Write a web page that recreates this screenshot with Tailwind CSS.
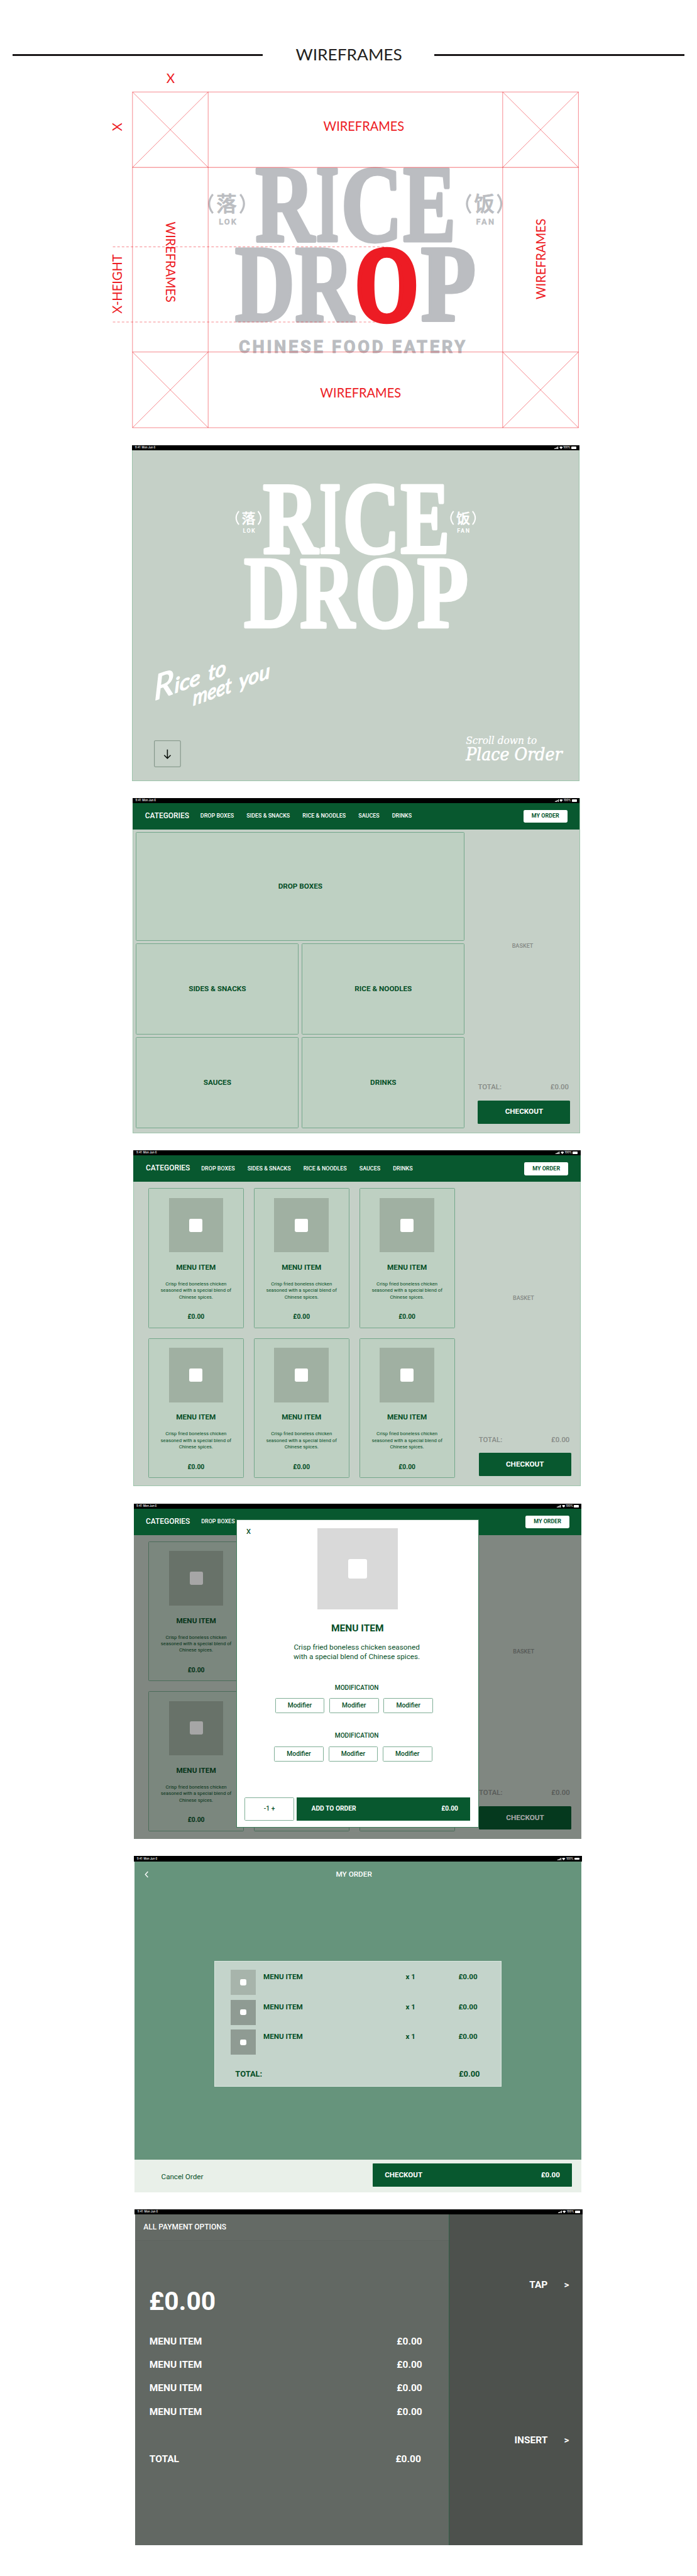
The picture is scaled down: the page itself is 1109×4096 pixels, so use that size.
<!DOCTYPE html>
<html lang="en">
<head>
<meta charset="utf-8">
<title>Rice Drop – Wireframes</title>
<script src="https://cdn.jsdelivr.net/npm/@tailwindcss/browser@4"></script>
</head>
<body class="bg-white overflow-x-hidden">
<!-- The board is laid out on a 1400px canvas and scaled as a whole -->
<div class="[zoom:0.7919] w-[1400px] h-[5172px] flex flex-col font-[Roboto,sans-serif] font-bold text-[#054f27] whitespace-nowrap overflow-hidden">

  <header class="mt-[90px] h-[41px] px-[25px] flex items-center justify-between text-[#231f20]">
    <div class="w-[503px] h-[3px] bg-[#1a1718]"></div>
    <svg class="w-[218px] h-[41px]" viewBox="0 0 218 41"><text x="3" y="32" font-family="Lato, sans-serif" font-weight="400" font-size="32" textLength="214" lengthAdjust="spacingAndGlyphs" fill="#231f20">WIREFRAMES</text></svg>
    <div class="w-[503px] h-[3px] bg-[#1a1718]"></div>
  </header>

  <!-- Logo clear-space diagram -->
  <svg class="shrink-0 mt-[9px] ml-[220px] w-[950px] h-[725px]" viewBox="220 140 950 725">
    <g font-family="'Liberation Serif', serif" font-weight="700" font-size="100" fill="#bbbdc1" stroke="#bbbdc1" stroke-width="2.8" stroke-linejoin="round">
      <text transform="translate(513.2 483.2) scale(1.647 2.2)">R</text>
      <text transform="translate(634.7 483.2) scale(1.2 2.2)">I</text>
      <text transform="translate(685.3 483.2) scale(1.713 2.2)">C</text>
      <text transform="translate(810 483.2) scale(1.592 2.2)">E</text>
      <text transform="translate(472.2 644) scale(1.665 2.2)">D</text>
      <text transform="translate(592.8 644) scale(1.639 2.2)">R</text>
      <text transform="translate(845.6 644) scale(1.815 2.2)">P</text>
    </g>
    <g fill="#bbbdc1" stroke="#bbbdc1" font-family="'Noto Sans CJK SC', sans-serif" font-weight="500" font-size="41" stroke-width=".9">
      <text x="435" y="424">落</text><text x="953" y="424">饭</text>
      <g fill="none" stroke-width="4"><path d="M428 390Q413 409 428 428M483 390Q498 409 483 428M946 390Q931 409 946 428M1000 390Q1015 409 1000 428"/></g>
    </g>
    <g fill="#bbbdc1" font-family="Roboto, sans-serif" font-weight="700">
      <text x="440" y="450.7" font-size="16.2" textLength="35" stroke="#bbbdc1" stroke-width=".4">LOK</text>
      <text x="957" y="450.7" font-size="16.2" textLength="36" stroke="#bbbdc1" stroke-width=".4">FAN</text>
      <text x="480" y="708" font-size="34.5" textLength="455" stroke="#bbbdc1" stroke-width="1.200">CHINESE FOOD EATERY</text>
    </g>
    <g fill="none" stroke="#ed1c24" stroke-opacity=".6" stroke-width="1.1">
      <path d="M266.500 184.500H1162.500V858.600H266.500ZM418.500 184.500V858.600M1010.300 184.500V858.600M266.500 706.600H1162.500"/>
      <path stroke-opacity=".42" stroke-width="2" d="M266.500 336H1162.500"/>
      <path d="M266.500 184.500L418.500 336M418.500 184.500L266.500 336M1010.300 184.500L1162.500 336M1162.500 184.500L1010.300 336M266.500 706.600L418.500 858.600M418.500 706.600L266.500 858.600M1010.300 706.600L1162.500 858.600M1162.500 706.600L1010.300 858.600"/>
      <path stroke-dasharray="5 4" d="M227 495.500H775M227 646.400H775"/>
    </g>
    <text font-family="'Liberation Serif', serif" font-weight="700" font-size="100" fill="#ed1c24" stroke="#ed1c24" stroke-width="5" stroke-linejoin="round" transform="translate(714.5 642.500) scale(1.62 2.15)">O</text>
    <g fill="#ed1c24" font-family="Lato, sans-serif" font-weight="400" font-size="26">
      <text x="334.500" y="166.700">X</text>
      <text x="650" y="263" textLength="162.500" lengthAdjust="spacingAndGlyphs">WIREFRAMES</text>
      <text x="643.500" y="798.500" textLength="162.500" lengthAdjust="spacingAndGlyphs">WIREFRAMES</text>
      <text transform="translate(245.500 263) rotate(-90)">X</text>
      <text transform="translate(245.500 629.500) rotate(-90)" textLength="119" lengthAdjust="spacingAndGlyphs">X-HEIGHT</text>
      <text transform="translate(333.500 445) rotate(90)" textLength="162" lengthAdjust="spacingAndGlyphs">WIREFRAMES</text>
      <text transform="translate(1096.500 601) rotate(-90)" textLength="162" lengthAdjust="spacingAndGlyphs">WIREFRAMES</text>
    </g>
  </svg>

  <!-- Screen 1: welcome -->
  <section class="shrink-0 mt-[29px] ml-[265px] w-[899px] h-[674px] flex flex-col bg-[#c5d0c7] border-x border-b border-[#9cc4aa]">
    <div data-part="status"></div>
    <svg class="-ml-px w-[899px] h-[663px]" viewBox="265 904.6 899 663">
      <g transform="translate(48.900 659.400) scale(.933)" font-family="'Liberation Serif', serif" font-weight="700" font-size="100" fill="#fff" stroke="#fff" stroke-width="2.8" stroke-linejoin="round">
        <text transform="translate(513.2 483.2) scale(1.647 2.2)">R</text>
        <text transform="translate(634.7 483.2) scale(1.2 2.2)">I</text>
        <text transform="translate(685.3 483.2) scale(1.713 2.2)">C</text>
        <text transform="translate(810 483.2) scale(1.592 2.2)">E</text>
        <text transform="translate(472.2 644) scale(1.665 2.2)">D</text>
        <text transform="translate(592.8 644) scale(1.639 2.2)">R</text>
        <text transform="translate(712.2 644) scale(1.684 2.2)">O</text>
        <text transform="translate(845.6 644) scale(1.815 2.2)">P</text>
      </g>
      <g fill="#fff" font-family="'Noto Sans CJK SC', sans-serif" font-weight="500" font-size="28">
        <text x="485" y="1051" stroke="#fff" stroke-width=".5">落</text><text x="917" y="1051" stroke="#fff" stroke-width=".5">饭</text>
        <path fill="none" stroke="#fff" stroke-width="2.600" d="M479.500 1027Q468.500 1040.500 479.500 1054M518 1027Q529 1040.500 518 1054M911.500 1027Q900.500 1040.500 911.500 1054M949.500 1027Q960.500 1040.500 949.500 1054"/>
      </g>
      <g fill="#fff" font-family="Roboto, sans-serif" font-weight="700" font-size="11.300">
        <text x="487.500" y="1069.700" textLength="24.500">LOK</text>
        <text x="918.500" y="1069.700" textLength="25">FAN</text>
      </g>
      <g fill="#fff" stroke="#fff" stroke-width="1.800" stroke-linejoin="round" font-family="Lato, sans-serif" font-weight="400" font-style="italic" font-size="42">
        <text transform="translate(309 1408) skewY(-19.500)" font-size="70" textLength="40" lengthAdjust="spacingAndGlyphs">R</text>
        <text transform="translate(350 1393) skewY(-19.500)" textLength="52" lengthAdjust="spacingAndGlyphs">ice</text>
        <text transform="translate(418 1368) skewY(-19.500)" textLength="36" lengthAdjust="spacingAndGlyphs">to</text>
        <text transform="translate(387 1418) skewY(-19.500)" textLength="78" lengthAdjust="spacingAndGlyphs">meet</text>
        <text transform="translate(480 1384) skewY(-19.500)" textLength="62" lengthAdjust="spacingAndGlyphs">you</text>
      </g>
      <rect x="309.500" y="1488.500" width="52.500" height="52.500" rx="2" fill="none" stroke="#7d9083" stroke-width="1.300"/>
      <path d="M335.700 1506V1524M329.200 1517.500L335.700 1524L342.200 1517.500" fill="none" stroke="#0b120d" stroke-width="2"/>
      <g fill="#fff" stroke="#fff" font-family="'DejaVu Serif Condensed', 'DejaVu Serif', serif" font-weight="400" font-style="italic">
        <text x="936" y="1495" font-size="22" textLength="143" lengthAdjust="spacingAndGlyphs" stroke-width=".3">Scroll down to</text>
        <text x="936" y="1528.300" font-size="36" textLength="194" lengthAdjust="spacingAndGlyphs" stroke-width=".8">Place Order</text>
      </g>
    </svg>
  </section>

  <!-- Screen 2: categories -->
  <section class="shrink-0 mt-[34px] ml-[266px] w-[899px] h-[674px] flex flex-col bg-[#c5d0c7] border-x border-b border-[#9cc4aa]">
    <div data-part="status"></div>
    <div data-part="nav"></div>
    <div class="flex">
      <div class="ml-[6px] mt-[5.3px] w-[660.3px] grid grid-cols-2 grid-rows-[217.8px_182.7px_182.6px] gap-x-[6.4px] gap-y-[5.7px] text-[14.8px]">
        <div class="col-span-2 flex items-center justify-center rounded-[2px] border border-[#74a78b] bg-[#bed0c2]">DROP BOXES</div>
        <div class="flex items-center justify-center rounded-[2px] border border-[#74a78b] bg-[#bed0c2]">SIDES &amp; SNACKS</div>
        <div class="flex items-center justify-center rounded-[2px] border border-[#74a78b] bg-[#bed0c2]">RICE &amp; NOODLES</div>
        <div class="flex items-center justify-center rounded-[2px] border border-[#74a78b] bg-[#bed0c2]">SAUCES</div>
        <div class="flex items-center justify-center rounded-[2px] border border-[#74a78b] bg-[#bed0c2]">DRINKS</div>
      </div>
      <div class="ml-[26.700px]" data-part="basket"></div>
    </div>
  </section>

  <!-- Screen 3: menu -->
  <section class="shrink-0 mt-[33.8px] ml-[267.8px] w-[899px] h-[674.2px] flex flex-col bg-[#c5d0c7] border-x border-b border-[#9cc4aa]">
    <div data-part="status"></div>
    <div data-part="nav"></div>
    <div class="flex">
      <div class="ml-[28.6px] mt-[12.3px] w-[616.3px]" data-part="menu"></div>
      <div class="ml-[48px]" data-part="basket"></div>
    </div>
  </section>

  <!-- Screen 4: item dialog over the menu -->
  <section class="relative shrink-0 mt-[35px] ml-[269px] w-[899px] h-[673.8px] flex flex-col bg-[#c5d0c7] overflow-hidden">
    <div data-part="status"></div>
    <div data-part="navShort"></div>
    <div class="flex">
      <div class="ml-[29px] mt-[12.3px] w-[616.3px]" data-part="menu"></div>
      <div class="ml-[48px]" data-part="basket"></div>
    </div>
    <div class="absolute inset-x-0 bottom-0 top-[63.6px] bg-black/35"></div>
    <div class="absolute left-[205.8px] top-[32.600px] w-[487px] h-[617.600px] flex flex-col items-center border border-[#3f7d5b] bg-white">
      <div class="absolute left-[19px] top-[15px] text-[14px] leading-[18px] font-medium">X</div>
      <div class="mt-[16.2px] size-[162.3px] flex items-center justify-center bg-[#d9d9d9]"><div class="size-[38.6px] rounded-[4px] bg-white"></div></div>
      <div class="mt-[27px] text-[19.6px] leading-[24px]">MENU ITEM</div>
      <div class="mt-[15.600px] -ml-[3px] text-center text-[14.8px] leading-[19.5px] font-normal">Crisp fried boneless chicken seasoned<br>with a special blend of Chinese spices.</div>
      <div class="mt-[44.600px] -ml-[3px] text-[12.8px] leading-[16px] font-medium">MODIFICATION</div>
      <div class="mt-[12.700px] -ml-[14px] flex gap-[9.700px] text-[13px] font-medium">
        <div class="w-[99.4px] h-[29.6px] flex items-center justify-center rounded-[2px] border border-[#7fae96]">Modifier</div>
        <div class="w-[99.4px] h-[29.6px] flex items-center justify-center rounded-[2px] border border-[#7fae96]">Modifier</div>
        <div class="w-[99.4px] h-[29.6px] flex items-center justify-center rounded-[2px] border border-[#7fae96]">Modifier</div>
      </div>
      <div class="mt-[38px] -ml-[3px] text-[12.8px] leading-[16px] font-medium">MODIFICATION</div>
      <div class="mt-[13.600px] -ml-[17.400px] flex gap-[9.700px] text-[13px] font-medium">
        <div class="w-[99.4px] h-[29.6px] flex items-center justify-center rounded-[2px] border border-[#7fae96]">Modifier</div>
        <div class="w-[99.4px] h-[29.6px] flex items-center justify-center rounded-[2px] border border-[#7fae96]">Modifier</div>
        <div class="w-[99.4px] h-[29.6px] flex items-center justify-center rounded-[2px] border border-[#7fae96]">Modifier</div>
      </div>
      <div class="mt-[71.600px] flex gap-[5.4px] text-[13px]">
        <div class="w-[99px] h-[47px] flex items-center justify-center rounded-[2px] border border-[#7fae96] font-medium">-1 +</div>
        <div class="w-[348.700px] h-[47px] pl-[29.600px] pr-[24.300px] flex items-center justify-between bg-[#08582f] text-white"><span>ADD TO ORDER</span><span>£0.00</span></div>
      </div>
    </div>
  </section>

  <!-- Screen 5: my order -->
  <section class="shrink-0 mt-[34.4px] ml-[270px] w-[898.7px] h-[674.7px] flex flex-col bg-[#66947c]">
    <div data-part="status"></div>
    <div class="h-[52.400px] pl-[21px] flex items-center text-white">
      <svg class="w-[8px] h-[14px]" viewBox="0 0 8 14"><path d="M6.800 1.300L1.600 7L6.800 12.700" fill="none" stroke="#fff" stroke-width="1.700"/></svg>
      <div class="ml-[376px] text-[14.800px] font-medium">MY ORDER</div>
    </div>
    <div class="mt-[147.100px] ml-[161px] w-[577px] h-[252.200px] pt-[16.600px] pl-[31.500px] border border-[#dbe6df] bg-[#c4d4cb]">
      <div class="flex flex-col gap-[9.900px] text-[14.700px]" data-part="order"></div>
      <div class="mt-[28px] pl-[9px] flex text-[16.300px] leading-[20px]"><span class="w-[449px]">TOTAL:</span><span>£0.00</span></div>
    </div>
    <div class="mt-auto h-[65.200px] flex bg-[#e9f0e9] text-[14.700px]">
      <div class="pl-[54px] pt-[25px] w-[478.800px] leading-[18px] font-normal">Cancel Order</div>
      <div class="mt-[7.700px] w-[400.300px] h-[46.200px] pl-[24.200px] pr-[24px] flex items-center justify-between rounded-[1px] bg-[#08582f] text-white"><span>CHECKOUT</span><span>£0.00</span></div>
    </div>
  </section>

  <!-- Screen 6: payment -->
  <section class="shrink-0 mt-[33.9px] ml-[271.3px] w-[898.7px] h-[674.2px] flex flex-col text-white">
    <div data-part="status"></div>
    <div class="flex-1 flex text-[19.600px] leading-[24px]">
      <div class="w-[631.700px] border-r border-[#2f5f45] bg-[#626863]">
        <div class="h-[53.300px] pl-[17px] flex items-center border-b border-[#5e645f] bg-[#646a65] text-[15.2px] font-medium">ALL PAYMENT OPTIONS</div>
        <div class="mt-[92px] pl-[28px] text-[51.5px] leading-[60px]">£0.00</div>
        <div class="mt-[38px] ml-[29px] w-[548px] flex flex-col gap-[23.200px]">
          <div class="flex justify-between"><span>MENU ITEM</span><span>£0.00</span></div>
          <div class="flex justify-between"><span>MENU ITEM</span><span>£0.00</span></div>
          <div class="flex justify-between"><span>MENU ITEM</span><span>£0.00</span></div>
          <div class="flex justify-between"><span>MENU ITEM</span><span>£0.00</span></div>
        </div>
        <div class="mt-[71.500px] ml-[29px] w-[545.600px] flex justify-between"><span>TOTAL</span><span>£0.00</span></div>
      </div>
      <div class="flex-1 pt-[129.600px] pr-[26.500px] bg-[#4d514d]">
        <div class="flex justify-end gap-[33px]"><span>TAP</span><span>&gt;</span></div>
        <div class="mt-[288px] flex justify-end gap-[33px]"><span>INSERT</span><span>&gt;</span></div>
      </div>
    </div>
  </section>
</div>

<script>
const card = `
  <div class="h-[281px] pt-[18.4px] flex flex-col items-center rounded-[2px] border border-[#74a78b] bg-[#bed0c2]">
    <div class="size-[109.3px] flex items-center justify-center bg-[#a0b0a2]"><div class="size-[26.5px] rounded-[3px] bg-white"></div></div>
    <div class="mt-[21px] text-[14.8px] leading-[18px]">MENU ITEM</div>
    <div class="mt-[18.8px] text-center text-[9.8px] leading-[13.1px] font-normal">Crisp fried boneless chicken<br>seasoned with a special blend of<br>Chinese spices.</div>
    <div class="mt-[25.3px] text-[13px] leading-[16px]">£0.00</div>
  </div>`;

const orderRow = (thumb) => `
  <div class="flex">
    <div class="size-[50.4px] flex items-center justify-center ${thumb}"><div class="size-[12px] rounded-[3px] bg-white"></div></div>
    <div class="pl-[15px] pt-[5px] flex leading-[18px]"><span class="w-[286px]">MENU ITEM</span><span class="w-[106px]">x 1</span><span>£0.00</span></div>
  </div>`;

const navBar = (items) => `
    <div class="-mx-px h-[53px] pl-[25px] pr-[25px] flex items-center bg-[#08582f] text-white text-[11.3px] font-medium">
      <span class="w-[88.4px] text-[15.1px]">CATEGORIES</span>
      <span class="ml-[23px] flex gap-[25.3px]">${items.map(t => `<span>${t}</span>`).join('')}</span>
      <span class="ml-auto w-[87.8px] h-[25.6px] flex items-center justify-center rounded-[3px] bg-white font-bold text-[#08582f]">MY ORDER</span>
    </div>`;

const parts = {
  status: `
    <div class="-mx-px h-[10.6px] px-[6px] flex items-center justify-between bg-black text-white font-[Inter,sans-serif] text-[5.4px] leading-none font-medium">
      <span class="whitespace-pre">9:41  Mon Jun 6</span>
      <span class="flex items-center gap-[1.4px]">
        <svg class="w-[8px] h-[5px]" viewBox="0 0 8 5"><path fill="#fff" d="M0 3.500h1.500V5H0zM2.100 2.600h1.500V5H2.100zM4.200 1.400h1.500V5H4.200zM6.300 0h1.500v5H6.300z"/></svg>
        <svg class="w-[7px] h-[5px]" viewBox="0 0 7 5"><path fill="#fff" d="M3.500 5L0 1.400Q3.500-1.300 7 1.400Z"/></svg>
        <span>100%</span>
        <span class="w-[10px] h-[4.6px] rounded-[1px] bg-white"></span>
      </span>
    </div>`,
  nav: navBar(['DROP BOXES', 'SIDES &amp; SNACKS', 'RICE &amp; NOODLES', 'SAUCES', 'DRINKS']),
  navShort: navBar(['DROP BOXES']),
  menu: `<div class="grid grid-cols-3 gap-x-[19.8px] gap-y-[20px]">${card.repeat(6)}</div>`,
  basket: `
    <div class="w-[185.6px] text-[#858a86] font-medium">
      <div class="mt-[227px] pr-[6px] text-center text-[11.5px] leading-[14px]">BASKET</div>
      <div class="mt-[268.4px] pr-[3px] flex justify-between text-[14.4px] leading-[16px]"><span>TOTAL:</span><span>£0.00</span></div>
      <div class="mt-[18.6px] h-[46.900px] flex items-center justify-center rounded-[2px] bg-[#08582f] text-[14.8px] font-bold text-white">CHECKOUT</div>
    </div>`,
  order: orderRow('bg-[#a7b4ab]') + orderRow('bg-[#8f9b93]') + orderRow('bg-[#8f9b93]'),
};
document.querySelectorAll('[data-part]').forEach(el => { el.innerHTML = parts[el.dataset.part]; });
</script>
</body>
</html>
